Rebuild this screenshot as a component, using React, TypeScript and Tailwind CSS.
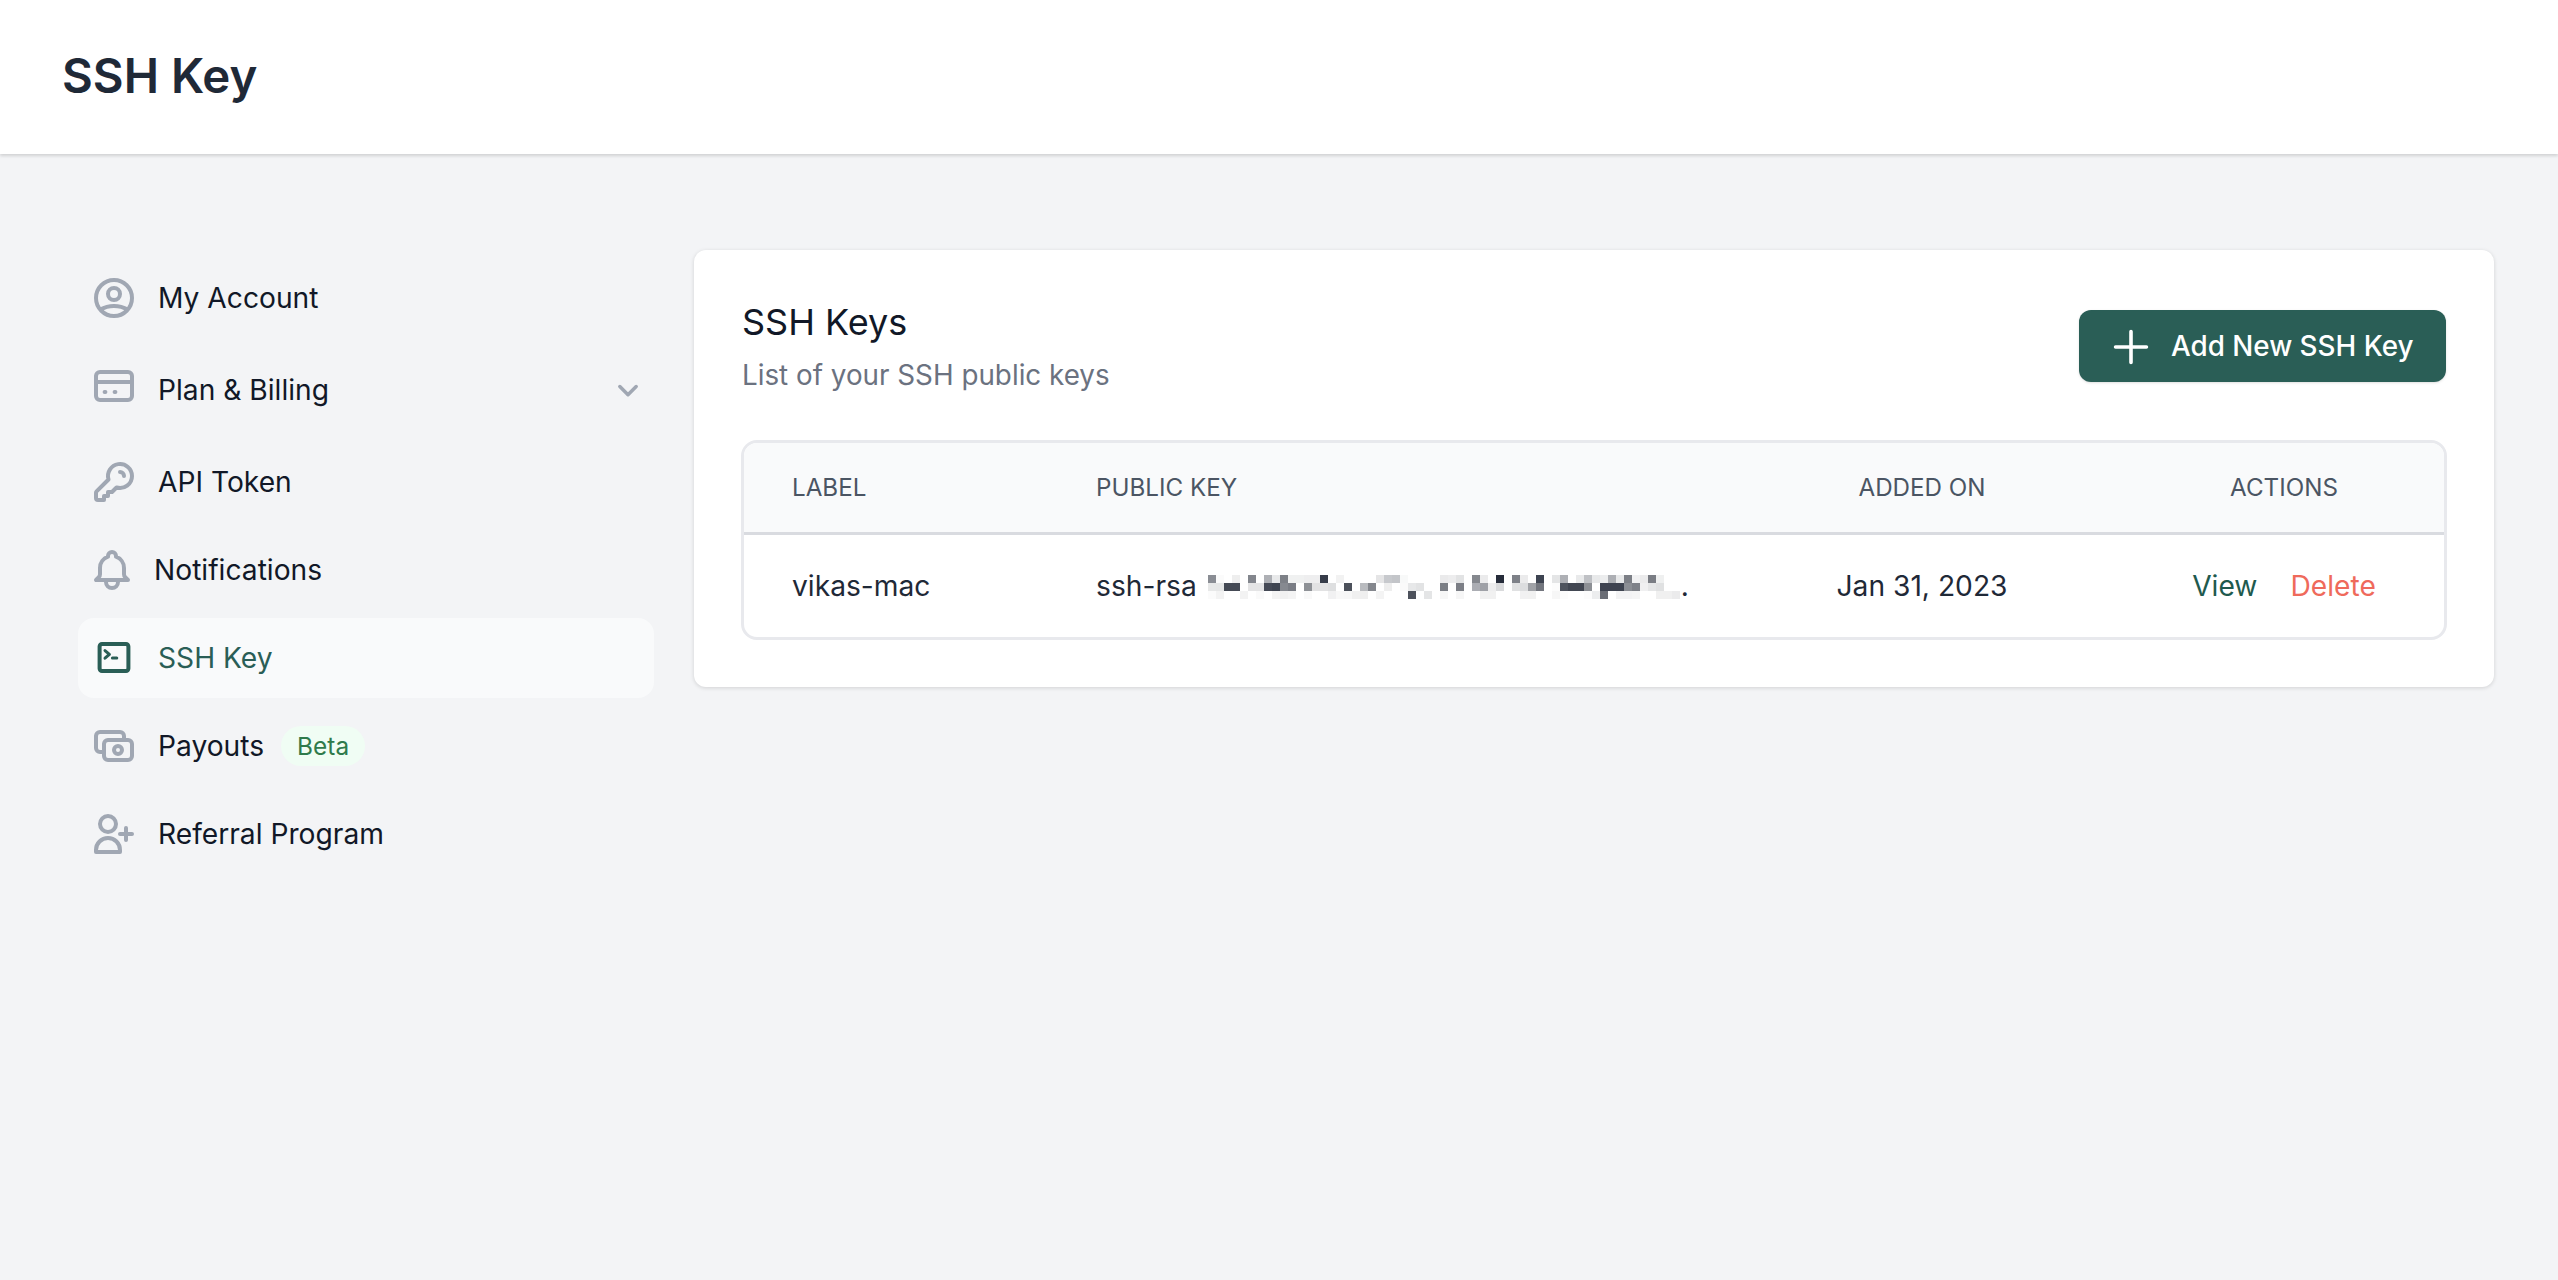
import type { ReactNode } from "react";

const grayIcon = "w-12 h-12 shrink-0 text-[#a0a7b3]";

const Outline = ({ d, className, sw = 2 }: { d: string; className?: string; sw?: number }) => (
  <svg viewBox="0 0 24 24" fill="none" stroke="currentColor" strokeWidth={sw} strokeLinecap="round" strokeLinejoin="round" className={className}>
    <path d={d} />
  </svg>
);

const icons = {
  user: "M5.121 17.804A13.937 13.937 0 0112 16c2.5 0 4.847.655 6.879 1.804M15 10a3 3 0 11-6 0 3 3 0 016 0zm6 2a9 9 0 11-18 0 9 9 0 0118 0z",
  card: "M5 5h14a2 2 0 012 2v10a2 2 0 01-2 2H5a2 2 0 01-2-2V7a2 2 0 012-2zM3 10h18M7.3 15h.4M12.3 15h.4",
  key: "M15 7a2 2 0 012 2m4 0a6 6 0 01-7.743 5.743L11 17H9v2H7v2H4a1 1 0 01-1-1v-2.586a1 1 0 01.293-.707l5.964-5.964A6 6 0 1121 9z",
  bell: "M15 17h5l-1.405-1.405A2.032 2.032 0 0118 14.158V11a6.002 6.002 0 00-4-5.659V5a2 2 0 10-4 0v.341C7.67 6.165 6 8.388 6 11v3.159c0 .538-.214 1.055-.595 1.436L4 17h5m6 0v1a3 3 0 11-6 0v-1m6 0H9",
  cash: "M17 9V7a2 2 0 00-2-2H5a2 2 0 00-2 2v6a2 2 0 002 2h2m2 4h10a2 2 0 002-2v-6a2 2 0 00-2-2H9a2 2 0 00-2 2v6a2 2 0 002 2zm7-5a2 2 0 11-4 0 2 2 0 014 0z",
  userAdd: "M18 9v3m0 0v3m0-3h3m-3 0h-3m-2-5a4 4 0 11-8 0 4 4 0 018 0zM3 20a6 6 0 0112 0v1H3v-1z",
};

const TerminalIcon = () => (
  <svg viewBox="0 0 24 24" fill="none" stroke="currentColor" strokeWidth={2} strokeLinecap="round" strokeLinejoin="round" className="w-12 h-12 shrink-0 text-[#2a5e56]">
    <path d="M6 5h12a1.2 1.2 0 011.2 1.2v11.1a1.2 1.2 0 01-1.2 1.2H6a1.2 1.2 0 01-1.2-1.2V6.200A1.200 1.200 0 016 5z" />
    <path strokeWidth={1.5} d="M7.500 8.300l2.200 1.900-2.200 1.900M11.200 12h2.200" />
  </svg>
);

// the blurred key in the reference: 3 rows of 8px blocks, "-" is an empty block
const blurRows = [
  "8a8d94 fbfbfb - eeeeee - 83868d - aeb0b5 e8e9ea 7d8087 f0f1f1 f0f1f1 eeeeef eeeeef 363c49 - f2f2f2 - - - - e5e5e6 c7c9cd c3c5c9 f8f9f9 - - - - eaeaeb ededee e2e3e4 - 85888e ebebec - 262c3a - 7e8188 ebebec - 3e4451 - e4e5e6 aeb0b5 - e9eaeb bfc1c5 e8e9ea ecedee adafb4 e8e9ea 7c7f86 f1f1f2 ebebec 7a7d84 eff0f0",
  "e7e8e8 e6e7e7 454a55 454a55 - e4e4e5 e4e4e5 454a56 3f4551 868990 7a7d85 - 8e9196 e2e2e3 e2e2e3 dedfe0 - 4c515b - b9bbbf 84878d - eeeeee - fafafa e7e8e9 e2e3e4 - - 7b7e85 - 7c7f86 - abadb3 9fa1a7 eeeeef d9dadc - e0e1e2 dcdddf a0a2a7 73767e - fcfcfc 4f545e 424752 424752 8d9095 - 3e4350 3e4350 3e4350 8b8e94 7e8188 f0f0f1 e5e6e7 e0e1e2",
  "fbfbfb f3f3f3 - - f3f3f3 - fafafa - f4f4f4 f1f1f1 f4f4f4 - f9f9f9 - - f1f1f2 f8f8f8 f7f7f7 f0f0f0 efefef - f4f4f4 - - - 4d525c - e4e5e6 - f7f7f7 - f6f6f6 - - f1f1f1 f1f1f1 - - - f1f1f2 f1f1f1 - - f7f7f7 fcfcfc - - fcfcfc ecedee 6b6e76 - f3f3f4 f3f3f4 f5f5f5 - - f0f0f0 f0f0f0 ebebec",
];

const BlurredKey = () => (
  <svg width={472} height={24} viewBox="0 0 472 24" shapeRendering="crispEdges" className="shrink-0">
    {blurRows.map((row, y) =>
      row.split(" ").map((c, x) =>
        c === "-" ? null : <rect key={`${y}-${x}`} x={x * 8} y={y * 8} width={8} height={8} fill={`#${c}`} />
      )
    )}
  </svg>
);

const NavRow = ({ icon, children, className = "text-[#111827]" }: { icon: ReactNode; children: ReactNode; className?: string }) => (
  <div className={`flex items-center h-20 px-3 rounded-2xl text-[28.2px] ${className}`}>
    {icon}
    {children}
  </div>
);

const App = () => {
  return (
    <div className="h-[1280px] bg-[#f3f4f6] font-['Inter',sans-serif] overflow-hidden">
      <header className="h-[154px] bg-white flex items-center pl-[62px] pb-0.5 shadow-[0_2px_3px_rgba(0,0,0,0.14)]">
        <h1 className="text-[47.4px] font-semibold text-[#1f2937]">SSH Key</h1>
      </header>

      <main className="flex items-start pl-[78px] pr-[65px] pt-[96px] gap-10">
        <nav className="w-[576px] shrink-0 pt-2 flex flex-col">
          <NavRow className="mb-3 text-[#111827]" icon={<Outline d={icons.user} className={grayIcon} />}>
            <span className="ml-5">My Account</span>
          </NavRow>
          <NavRow
            className="mb-3 text-[#111827]"
            icon={
              <div className="-mt-2 flex">
                <Outline d={icons.card} className={grayIcon} />
              </div>
            }
          >
            <span className="ml-5">Plan &amp; Billing</span>
            <Outline d="M19 9l-7 7-7-7" sw={3} className="w-7 h-7 ml-auto text-[#a0a7b3]" />
          </NavRow>
          <NavRow className="mb-2 text-[#111827]" icon={<Outline d={icons.key} className={grayIcon} />}>
            <span className="ml-5">API Token</span>
          </NavRow>
          <NavRow className="mb-2 text-[#111827]" icon={<Outline d={icons.bell} className={`${grayIcon} -ml-0.5`} />}>
            <span className="ml-[18px]">Notifications</span>
          </NavRow>
          <NavRow className="mb-2 bg-[#f9fafb] text-[#2a5e56]" icon={<TerminalIcon />}>
            <span className="ml-5">SSH Key</span>
          </NavRow>
          <NavRow className="mb-2 text-[#111827]" icon={<Outline d={icons.cash} className={grayIcon} />}>
            <span className="ml-5">Payouts</span>
            <span className="ml-[17px] h-10 px-4 rounded-full bg-[#f0fdf4] text-[24.4px] leading-10 text-[#2f7a4b]">Beta</span>
          </NavRow>
          <NavRow icon={<Outline d={icons.userAdd} className={grayIcon} />}>
            <span className="ml-5">Referral Program</span>
          </NavRow>
        </nav>

        <section className="flex-1 bg-white rounded-xl p-[47px] shadow-[0_1px_4px_rgba(0,0,0,0.14)]">
          <div className="flex justify-between items-start">
            <div className="pt-0.5 pl-px">
              <h2 className="text-[36px] leading-[46px] font-normal text-[#111827]">SSH Keys</h2>
              <p className="mt-2.5 text-[27.8px] leading-10 text-[#6b7280]">List of your SSH public keys</p>
            </div>
            <button className="mt-[13px] mr-px pt-px h-[72px] w-[367px] flex items-center pl-[34px] bg-[#2a5e56] rounded-xl text-white text-[27.8px] font-medium shadow-sm">
              <svg viewBox="0 0 28 28" className="w-9 h-9 shrink-0" fill="none" stroke="currentColor" strokeWidth={2.8} strokeLinecap="round">
                <path d="M14 2v24M2 14h24" />
              </svg>
              <span className="ml-[22px]">Add New SSH Key</span>
            </button>
          </div>

          <div className="mt-[45px] border-[3px] border-[#e8e9ed] rounded-2xl overflow-hidden">
            <div className="grid grid-cols-[304px_672px_404px_320px] h-[88px] pt-px items-center bg-[#f9fafb] border-b-[3px] border-[#d9dbe0] box-content text-[24.2px] text-[#4b5563]">
              <div className="pl-12">LABEL</div>
              <div className="pl-12">PUBLIC KEY</div>
              <div className="text-center">ADDED ON</div>
              <div className="text-center">ACTIONS</div>
            </div>
            <div className="grid grid-cols-[304px_672px_404px_320px] h-[102px] items-center text-[28.2px] text-[#1f2937]">
              <div className="pl-12">vikas-mac</div>
              <div className="pl-12 flex items-center">
                <span>ssh-rsa</span>
                <span className="ml-[11px] mt-[3px] flex">
                  <BlurredKey />
                </span>
                <span className="ml-px">.</span>
              </div>
              <div className="text-center">Jan 31, 2023</div>
              <div className="flex justify-center gap-[33px]">
                <span className="text-[#1f5a4e]">View</span>
                <span className="text-[#ef6a5b]">Delete</span>
              </div>
            </div>
          </div>
        </section>
      </main>
    </div>
  );
};

export default App;
